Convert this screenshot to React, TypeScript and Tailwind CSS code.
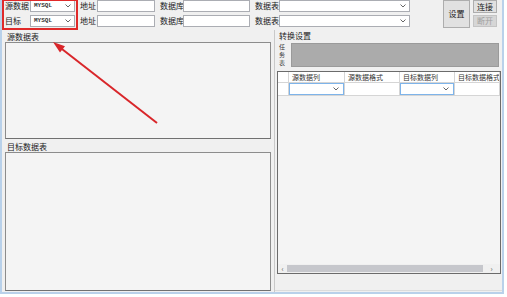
import React from "react";

const font = { fontFamily: '"Noto Sans CJK SC", "Noto Sans", sans-serif' };

const Chevron = () => (
  <svg width="6" height="4" viewBox="0 0 6 4" className="shrink-0">
    <polyline points="0.5,0.5 3,3 5.5,0.5" fill="none" stroke="#555" strokeWidth="0.9" />
  </svg>
);

const Combo: React.FC<{ width: string; value?: string }> = ({ width, value }) => (
  <div
    className={`${width} h-[12px] bg-white border border-[#abadb3] flex items-center justify-between pl-[3px] pr-[3px]`}
  >
    <span
      className="text-[6px] font-bold leading-none text-[#333]"
      style={{ fontFamily: '"Liberation Mono", monospace' }}
    >
      {value}
    </span>
    <Chevron />
  </div>
);

const Input: React.FC<{ width: string }> = ({ width }) => (
  <div className={`${width} h-[12px] bg-white border border-[#abadb3]`} />
);

const Label: React.FC<{ width: string; text: string; pad?: string }> = ({ width, text, pad = "pl-[5px]" }) => (
  <span className={`${width} ${pad} shrink-0 text-[8px] leading-none text-[#222] whitespace-nowrap`}>
    {text}
  </span>
);

const columns = [
  { title: "源数据列", width: "w-[56px]", combo: true },
  { title: "源数据格式", width: "w-[55px]", combo: false },
  { title: "目标数据列", width: "w-[55px]", combo: true },
  { title: "目标数据格式", width: "flex-1", combo: false },
];

export default function App() {
  return (
    <div className="w-[507px] h-[297px] bg-white relative overflow-hidden" style={font}>
      <div className="w-[504px] h-[294px] border-x-2 border-b-2 border-[#b9d1ea] bg-[#f0f0f0] flex flex-col">
        {/* top toolbar */}
        <div className="h-[30px] flex shrink-0">
          <div className="flex flex-col gap-[3px]">
            <div className="flex items-center h-[12px]">
              <Label width="w-[28px]" pad="pl-[3px]" text="源数据" />
              <Combo width="w-[45px]" value="MYSQL" />
              <Label width="w-[22px]" text="地址" />
              <Input width="w-[58px]" />
              <Label width="w-[28px]" text="数据库" />
              <Input width="w-[67px]" />
              <Label width="w-[29px]" text="数据表" />
              <Combo width="w-[131px]" />
            </div>
            <div className="flex items-center h-[12px]">
              <Label width="w-[28px]" pad="pl-[3px]" text="目标" />
              <Combo width="w-[45px]" value="MYSQL" />
              <Label width="w-[22px]" text="地址" />
              <Input width="w-[58px]" />
              <Label width="w-[28px]" text="数据库" />
              <Input width="w-[67px]" />
              <Label width="w-[29px]" text="数据表" />
              <Combo width="w-[131px]" />
            </div>
          </div>
          <button className="ml-[33px] w-[27px] h-[28px] bg-[#e1e1e1] border border-[#adadad] text-[8px] leading-none text-[#222]">
            设置
          </button>
          <div className="ml-[3px] flex flex-col gap-[2px]">
            <button className="w-[24px] h-[13px] bg-[#e1e1e1] border border-[#adadad] text-[8px] leading-none text-[#222]">
              连接
            </button>
            <button className="w-[24px] h-[12px] bg-[#d6d6d6] border border-[#c4c4c4] text-[8px] leading-none text-[#a0a0a0]">
              断开
            </button>
          </div>
        </div>

        {/* main area */}
        <div className="flex flex-1 min-h-0">
          {/* left column */}
          <div className="w-[271px] flex flex-col shrink-0">
            <div className="h-[12px] pl-[5px] pt-[3px] text-[8px] leading-none text-[#222]">源数据表</div>
            <div className="ml-[3px] w-[266px] h-[97px] bg-[#f4f4f4] border border-[#8c8c8c] border-b-[#707070]" />
            <div className="h-[13px] pl-[5px] pt-[4px] text-[8px] leading-none text-[#222]">目标数据表</div>
            <div className="ml-[3px] w-[266px] h-[139px] bg-[#f4f4f4] border border-[#8c8c8c] border-b-[#707070]" />
          </div>

          {/* right column */}
          <div className="flex-1 flex flex-col border-l border-[#c9c9c9] ml-[1px] pb-[1px]">
            <div className="h-[12px] pl-[4px] pt-[2px] text-[8px] leading-none text-[#222]">转换设置</div>
            <div className="flex items-center h-[25px] pl-[4px]">
              <div className="w-[12px] flex flex-col items-start">
                <span className="block h-[8px] text-[6px] leading-[8px] text-[#333]">任</span>
                <span className="block h-[8px] text-[6px] leading-[8px] text-[#333]">务</span>
                <span className="block h-[8px] text-[6px] leading-[8px] text-[#333]">表</span>
              </div>
              <div className="w-[208px] h-[24px] bg-[#ababab] border border-[#9a9a9a]" />
            </div>
            <div className="mt-[4px] ml-[2px] w-[224px] h-[203px] border border-[#6b6b6b] bg-[#f4f4f4] flex flex-col overflow-hidden">
              <div className="flex h-[11px] bg-white border-b border-[#d5d5d5]">
                <div className="w-[11px] border-r border-[#d5d5d5]" />
                {columns.map((c) => (
                  <div
                    key={c.title}
                    className={`${c.width} border-r border-[#d5d5d5] pl-[3px] text-[7px] leading-[11px] text-[#333] whitespace-nowrap overflow-hidden`}
                  >
                    {c.title}
                  </div>
                ))}
              </div>
              <div className="flex h-[13px] bg-white border-b border-[#d5d5d5]">
                <div className="w-[11px] border-r border-[#d5d5d5]" />
                {columns.map((c) => (
                  <div key={c.title} className={`${c.width} border-r border-[#d5d5d5]`}>
                    {c.combo && (
                      <div className="h-full border border-[#7eb4ea] bg-white flex items-center justify-end pr-[4px]">
                        <Chevron />
                      </div>
                    )}
                  </div>
                ))}
              </div>
              <div className="flex-1" />
              <div className="h-[9px] flex items-center bg-[#f0f0f0]">
                <span className="w-[9px] text-center text-[7px] leading-none text-[#555]">‹</span>
                <div className="w-[196px] h-[7px] bg-[#c6c7cc]" />
                <span className="flex-1 text-center text-[7px] leading-none text-[#555]">›</span>
              </div>
            </div>
            <div className="flex-1 border-b border-[#dcdcdc]" />
          </div>
        </div>
      </div>

      {/* annotation overlay */}
      <div className="absolute left-[2px] top-[-1px] w-[76px] h-[31px] border-2 border-[#e02a2a]" />
      <svg className="absolute left-0 top-0" width="507" height="297" viewBox="0 0 507 297">
        <line x1="157" y1="123" x2="60" y2="47.5" stroke="#d9262a" strokeWidth="2" />
        <polygon points="53,42 65,46.2 60,52.6" fill="#d9262a" />
      </svg>
    </div>
  );
}
